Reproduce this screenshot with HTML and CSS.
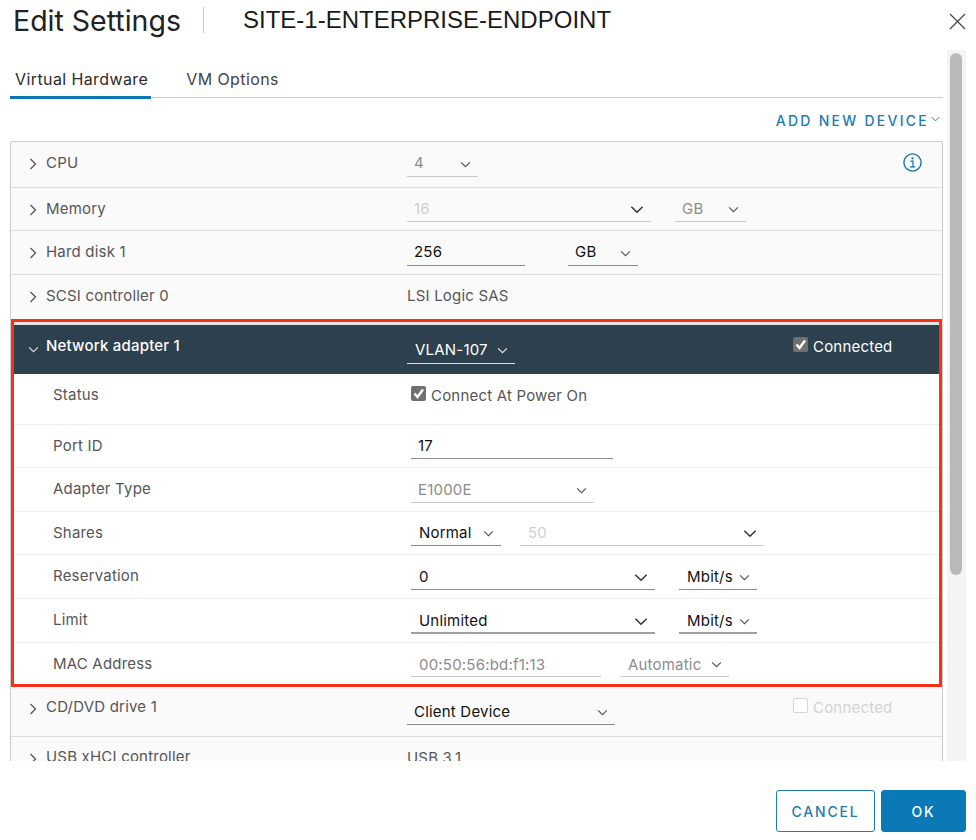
FILE: index.html
```html
<!DOCTYPE html>
<html lang="en">
<head>
<meta charset="utf-8">
<title>Edit Settings</title>
<link rel="stylesheet" href="styles.css">
</head>
<body>
<svg class="defs" width="0" height="0" aria-hidden="true">
  <symbol id="right" viewBox="0 0 8 12"><polyline points="1.5,1 6.5,6 1.5,11" fill="none" stroke="currentColor" stroke-width="1.3"/></symbol>
  <symbol id="down" viewBox="0 0 12 8"><polyline points="1,1.5 6,6.5 11,1.5" fill="none" stroke="currentColor" stroke-width="1.3"/></symbol>
  <symbol id="tick" viewBox="0 0 15 15"><polyline points="3.5,7.5 6.5,11 12,3.5" fill="none" stroke="#fff" stroke-width="2.4"/></symbol>
</svg>
<div class="dialog">
  <header class="header">
    <h1 class="title">Edit Settings</h1>
    <span class="vm-name">SITE-1-ENTERPRISE-ENDPOINT</span>
    <svg class="close" width="17" height="17" viewBox="0 0 17 17"><path d="M1 1L16 16M16 1L1 16" fill="none" stroke="#444" stroke-width="1.2"/></svg>
  </header>

  <div class="body">
    <main class="content">
      <nav class="tabs">
        <span class="tab tab-active">Virtual Hardware</span>
        <span class="tab">VM Options</span>
      </nav>
      <div class="actions">
        <span class="add-device">ADD NEW DEVICE</span>
        <svg class="add-chev" width="9" height="6"><use href="#down"/></svg>
      </div>

      <div class="table">
        <div class="row row-cpu">
          <svg class="chev" width="8" height="12"><use href="#right"/></svg>
          <span class="label">CPU</span>
          <div class="controls">
            <span class="field w71 dim"><span>4</span><svg class="sm" width="11" height="7"><use href="#down"/></svg></span>
          </div>
          <svg class="info" width="19" height="19" viewBox="0 0 19 19"><circle cx="9.5" cy="9.5" r="8.6" fill="none" stroke="currentColor" stroke-width="1.4"/><circle cx="9.5" cy="5.4" r="1.1" fill="currentColor"/><path d="M7.4 8.2h2.6v5.4M7 13.8h5.2" fill="none" stroke="currentColor" stroke-width="1.2"/></svg>
        </div>
        <div class="row row-43">
          <svg class="chev" width="8" height="12"><use href="#right"/></svg>
          <span class="label">Memory</span>
          <div class="controls gap-24">
            <span class="field w244 faint"><span>16</span><svg class="lg" width="14" height="9"><use href="#down"/></svg></span>
            <span class="field w71 dim"><span>GB</span><svg class="sm" width="11" height="7"><use href="#down"/></svg></span>
          </div>
        </div>
        <div class="row">
          <svg class="chev" width="8" height="12"><use href="#right"/></svg>
          <span class="label">Hard disk 1</span>
          <div class="controls gap-43">
            <span class="field w118"><span>256</span></span>
            <span class="field w70"><span>GB</span><svg class="sm" width="11" height="7"><use href="#down"/></svg></span>
          </div>
        </div>
        <div class="row row-last">
          <svg class="chev" width="8" height="12"><use href="#right"/></svg>
          <span class="label">SCSI controller 0</span>
          <span class="plain">LSI Logic SAS</span>
        </div>

        <section class="adapter">
          <div class="head">
            <svg class="chev-open" width="11" height="7"><use href="#down"/></svg>
            <span class="label">Network adapter 1</span>
            <div class="controls">
              <span class="field w108"><span>VLAN-107</span><svg class="sm" width="11" height="7"><use href="#down"/></svg></span>
            </div>
            <span class="check"><span class="box on"><svg width="15" height="15"><use href="#tick"/></svg></span>Connected</span>
          </div>
          <div class="sub sub-status">
            <span class="label">Status</span>
            <span class="check"><span class="box on"><svg width="15" height="15"><use href="#tick"/></svg></span>Connect At Power On</span>
          </div>
          <div class="sub sub-43">
            <span class="label">Port ID</span>
            <div class="controls"><span class="field w202"><span>17</span></span></div>
          </div>
          <div class="sub">
            <span class="label">Adapter Type</span>
            <div class="controls"><span class="field w183 dim"><span>E1000E</span><svg class="sm" width="11" height="7"><use href="#down"/></svg></span></div>
          </div>
          <div class="sub sub-43">
            <span class="label">Shares</span>
            <div class="controls gap-19">
              <span class="field w90"><span>Normal</span><svg class="sm" width="11" height="7"><use href="#down"/></svg></span>
              <span class="field w244 faint"><span>50</span><svg class="lg" width="14" height="9"><use href="#down"/></svg></span>
            </div>
          </div>
          <div class="sub">
            <span class="label">Reservation</span>
            <div class="controls gap-24">
              <span class="field w244"><span>0</span><svg class="lg" width="14" height="9"><use href="#down"/></svg></span>
              <span class="field w78"><span>Mbit/s</span><svg class="sm" width="11" height="7"><use href="#down"/></svg></span>
            </div>
          </div>
          <div class="sub">
            <span class="label">Limit</span>
            <div class="controls gap-24">
              <span class="field w244 thick"><span>Unlimited</span><svg class="lg" width="14" height="9"><use href="#down"/></svg></span>
              <span class="field w78 thick"><span>Mbit/s</span><svg class="sm" width="11" height="7"><use href="#down"/></svg></span>
            </div>
          </div>
          <div class="sub sub-mac">
            <span class="label">MAC Address</span>
            <div class="controls gap-19">
              <span class="field w190 dim"><span>00:50:56:bd:f1:13</span></span>
              <span class="field w109 dim"><span>Automatic</span><svg class="sm" width="11" height="7"><use href="#down"/></svg></span>
            </div>
          </div>
        </section>

        <div class="row row-cd">
          <svg class="chev" width="8" height="12"><use href="#right"/></svg>
          <span class="label">CD/DVD drive 1</span>
          <div class="controls">
            <span class="field w208"><span>Client Device</span><svg class="sm" width="11" height="7"><use href="#down"/></svg></span>
          </div>
          <span class="check off"><span class="box"></span>Connected</span>
        </div>
        <div class="row row-usb">
          <svg class="chev" width="8" height="12"><use href="#right"/></svg>
          <span class="label">USB xHCI controller</span>
          <span class="plain">USB 3.1</span>
        </div>
      </div>
    </main>
    <aside class="scrollbar"><div class="thumb"></div></aside>
  </div>

  <footer class="footer">
    <button class="btn btn-outline">CANCEL</button>
    <button class="btn btn-solid">OK</button>
  </footer>
</div>
</body>
</html>
```

FILE: styles.css
```css
* { box-sizing: border-box; }
html, body { margin: 0; padding: 0; background: #fff; }
body { font-family: Inter, "Noto Sans", sans-serif; font-size: 15px; letter-spacing: 0.2px; color: #565656; }
.defs { position: absolute; }

.dialog { width: 976px; height: 840px; display: flex; flex-direction: column; overflow: hidden; }

/* header */
.header { height: 50px; flex: none; display: flex; align-items: flex-start; padding-left: 13px; }
.title { margin: 4px 0 0; width: 190px; height: 29px; font-size: 28.5px; line-height: 34px; font-weight: 400; letter-spacing: 0; color: #222; white-space: nowrap; }
.vm-name { margin: 6px 0 0 40px; font-family: "Liberation Sans", Arial, sans-serif; font-size: 24px; line-height: 28px; letter-spacing: 0; color: #1a1a1a; white-space: nowrap; position: relative; }
.vm-name::before { content: ""; position: absolute; left: -40px; top: 1px; width: 1px; height: 26px; background: #ccc; }
.close { margin: 13px 10px 0 auto; }

/* body */
.body { height: 711px; flex: none; display: flex; }
.content { width: 947px; padding: 0 4px 0 10px; overflow: hidden; }
.scrollbar { width: 19px; background: #f4f4f4; padding: 3px; }
.thumb { width: 12px; height: 522px; border-radius: 6px; background: #b9b9b9; }

/* tabs */
.tabs { height: 48px; display: flex; align-items: flex-end; gap: 30px; border-bottom: 1.5px solid #ccc; }
.tab { height: 48px; padding: 19px 4px 0 5px; line-height: 22px; font-size: 16px; letter-spacing: 0.4px; color: #444; }
.tab-active { padding: 17px 3px 0 5px; color: #2b2b2b; border-bottom: 3px solid #0f76b0; margin-bottom: -1.5px; }

.actions { height: 43px; display: flex; justify-content: flex-end; align-items: center; padding: 2px 3px 0 0; color: #1f7bb1; }
.add-device { font-size: 14px; font-weight: 500; letter-spacing: 2.25px; }
.add-chev { margin: -3px 0 0 2px; }

/* table */
.table { border: 1px solid #ccc; border-bottom: 0; border-radius: 2px 2px 0 0; background: #fafafa; }
.row { height: 44px; display: grid; grid-template-columns: 35px 361px 386px 1fr; border-bottom: 1px solid #ddd; padding-bottom: 8px; }
.row-cpu { height: 46px; padding-bottom: 10px; }
.row-43 { height: 43px; }
.row-last { border-bottom: 0; }
.row-cd { height: 50px; padding-bottom: 11px; }

.label { align-self: start; margin-top: 11px; line-height: 20px; white-space: nowrap; }
.row-cd .label, .row-usb .label { margin-top: 10px; }
.chev { margin: 16px 0 0 18px; color: #555; }
.chev-open { margin: 21px 0 0 14px; color: #ddd; }
.plain { align-self: start; margin-top: 11px; line-height: 20px; }

.controls { display: flex; align-self: end; }
.gap-19 { gap: 19px; }
.gap-24 { gap: 24px; }
.gap-43 { gap: 43px; }

.field { height: 24px; display: flex; justify-content: space-between; align-items: center; padding: 0 7px; border-bottom: 1px solid #8a8a8a; color: #111; line-height: 22px; white-space: nowrap; }
.field > span { margin-top: -3px; }
.row-43 .field > span, .row-cd .field > span, .sub .field > span { margin-top: -1px; }
.sub-mac .field > span { margin-top: 1px; }
.field.thick { border-bottom: 2px solid #a0a0a0; }
.field svg { color: #555; }
.field svg.lg { color: #333; }
.dim { color: #8c8c8c; border-bottom-color: #c8c8c8; }
.faint { color: #cfcfcf; border-bottom-color: #c8c8c8; }

.w70 { width: 70px; }
.w71 { width: 71px; }
.w78 { width: 78px; }
.w90 { width: 90px; }
.w108 { width: 108px; }
.w109 { width: 109px; }
.w118 { width: 118px; }
.w183 { width: 183px; }
.w190 { width: 190px; }
.w202 { width: 202px; }
.w208 { width: 208px; }
.w244 { width: 244px; }

.info { margin: 11px 0 0 110px; color: #12729f; }

/* highlighted adapter */
.adapter { width: 931px; height: 368px; border: 3px solid #f5311a; padding-top: 3px; background: #fff; box-shadow: inset 0 3px 0 #e4e4e4; }
.head { height: 49px; display: grid; grid-template-columns: 32px 361px 386px 1fr; padding-bottom: 10px; background: #2c404d; color: #fff; }
.head .label { margin-top: 11px; font-weight: 500; }
.head .field { color: #fff; border-bottom-color: #e0e0e0; padding-left: 8px; }
.head .field > span { margin-top: -4px; }
.head .field svg { color: #e8e8e8; margin-top: -2px; }

.sub { height: 44px; display: grid; grid-template-columns: 39px 358px 1fr; border-bottom: 1px solid #eee; padding-bottom: 8px; }
.sub .label { grid-column: 2; }
.sub::before { content: ""; }
.sub-status { height: 51px; }
.sub-43 { height: 43px; }
.sub-mac { height: 41px; border-bottom: 0; padding-bottom: 7px; }
.sub .field { padding-left: 8px; }
.sub .field.w202, .sub .field.w183 { padding-left: 7px; }

.check { display: flex; align-items: center; align-self: start; margin-top: 12px; gap: 5px; line-height: 20px; white-space: nowrap; }
.box { width: 15px; height: 15px; flex: none; border-radius: 2px; border: 1px solid #d6d6d6; background: #fff; margin-top: -5px; }
.box.on { background: #707070; border: 0; }
.box svg { display: block; }
.off { color: #d2d2d2; }
.row-cd .check { margin-top: 11px; }

/* footer */
.footer { height: 79px; flex: none; display: flex; justify-content: flex-end; gap: 6px; padding: 29px 10px 0 0; }
.btn { height: 42px; font-family: inherit; font-size: 14px; font-weight: 500; letter-spacing: 1.8px; border-radius: 3px; padding: 0; }
.btn-outline { width: 99px; color: #1f7bb1; background: #fff; border: 1px solid #1f7bb1; }
.btn-solid { width: 85px; color: #fff; background: #0a79b6; border: 1px solid #0a79b6; }
```
